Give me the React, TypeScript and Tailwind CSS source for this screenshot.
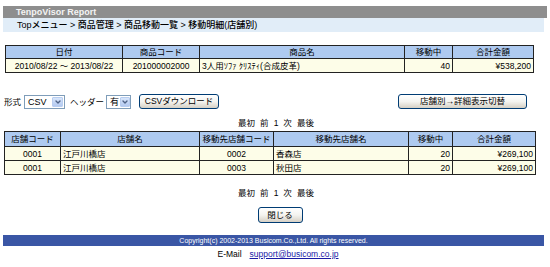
import { ChevronDown } from "lucide-react";

const font = "font-['Liberation_Sans','Noto_Sans_CJK_JP',sans-serif]";

function FakeSelect({ value, width }: { value: string; width: string }) {
  return (
    <div className={`${width} h-[14px] flex items-stretch border border-[#7f9db9] bg-white`}>
      <span className="flex-1 pl-[3px] text-[9px] leading-[12px]">{value}</span>
      <span className="w-[11px] m-[1px] flex items-center justify-center rounded-[1px] bg-gradient-to-b from-[#d8e6fb] to-[#b3c9f0] border border-[#b8cdf0]">
        <ChevronDown className="w-[8px] h-[8px] text-[#4d6185]" strokeWidth={4} />
      </span>
    </div>
  );
}

function XpButton({ label, width, className = "" }: { label: string; width: string; className?: string }) {
  return (
    <button
      className={`${width} h-[15px] rounded-[3px] border border-[#003c74] bg-gradient-to-b from-white via-[#f4f4f0] to-[#d6d0c5] text-[8.5px] leading-[13px] text-black text-center whitespace-nowrap ${className}`}
    >
      {label}
    </button>
  );
}

function Pager() {
  return (
    <div className="flex justify-center gap-[5px] text-[8.5px] leading-[11px] pl-[2px]">
      <span>最初</span>
      <span>前</span>
      <span>1</span>
      <span>次</span>
      <span>最後</span>
    </div>
  );
}

const th = "border border-[#222] bg-[#aecaf0] font-normal text-center h-[13px] leading-[11px] px-[2px] whitespace-nowrap";
const td = "border border-[#222] bg-[#fdfde8] h-[14px] leading-[12px] px-[2px] whitespace-nowrap overflow-hidden";

const rows = [
  { code: "0001", name: "江戸川橋店", toCode: "0002", toName: "香森店", qty: 20, total: "¥269,100" },
  { code: "0001", name: "江戸川橋店", toCode: "0003", toName: "秋田店", qty: 20, total: "¥269,100" },
];

export default function App() {
  return (
    <div className={`w-[550px] h-[267px] bg-white text-black overflow-hidden ${font}`}>
      <div className="mx-[3px] mt-[6px] h-[12px] bg-[#8e8e8e] text-[#f4f4f4] font-bold text-[9px] leading-[12px] pl-[13px]">
        TenpoVisor Report
      </div>
      <div className="ml-[3px] mr-[6px] h-[14px] bg-[#e1edf8] text-[9px] leading-[14px] pl-[14px] font-medium">
        Topメニュー &gt; 商品管理 &gt; 商品移動一覧 &gt; 移動明細(店舗別)
      </div>

      <table className="mt-[13px] ml-[5px] w-[528px] border-collapse text-[8.5px] table-fixed">
        <colgroup>
          <col className="w-[117px]" />
          <col className="w-[77px]" />
          <col className="w-[205px]" />
          <col className="w-[48px]" />
          <col className="w-[81px]" />
        </colgroup>
        <thead>
          <tr>
            <th className={th}>日付</th>
            <th className={th}>商品コード</th>
            <th className={th}>商品名</th>
            <th className={th}>移動中</th>
            <th className={th}>合計金額</th>
          </tr>
        </thead>
        <tbody>
          <tr>
            <td className={`${td} text-center`}>2010/08/22 ～ 2013/08/22</td>
            <td className={`${td} text-center`}>201000002000</td>
            <td className={td}>3人用ｿﾌｧ ｸﾘｽﾃｨ(合成皮革)</td>
            <td className={`${td} text-right`}>40</td>
            <td className={`${td} text-right`}>¥538,200</td>
          </tr>
        </tbody>
      </table>

      <div className="mt-[21px] flex items-center text-[8.5px] leading-[12px] pr-[23px]">
        <span className="ml-[4px] mr-[3px]">形式</span>
        <FakeSelect value="CSV" width="w-[41px]" />
        <span className="ml-[5px] mr-[2px]">ヘッダー</span>
        <FakeSelect value="有" width="w-[25px]" />
        <XpButton label="CSVダウンロード" width="w-[80px]" className="ml-[8px]" />
        <XpButton label="店舗別→詳細表示切替" width="w-[129px]" className="ml-auto" />
      </div>

      <div className="mt-[9px]">
        <Pager />
      </div>

      <table className="mt-[2px] ml-[4px] w-[531px] border-collapse text-[8.5px] table-fixed">
        <colgroup>
          <col className="w-[56px]" />
          <col className="w-[139px]" />
          <col className="w-[74px]" />
          <col className="w-[135px]" />
          <col className="w-[44px]" />
          <col className="w-[83px]" />
        </colgroup>
        <thead>
          <tr>
            <th className={`${th} h-[15px]`}>店舗コード</th>
            <th className={`${th} h-[15px]`}>店舗名</th>
            <th className={`${th} h-[15px]`}>移動先店舗コード</th>
            <th className={`${th} h-[15px]`}>移動先店舗名</th>
            <th className={`${th} h-[15px]`}>移動中</th>
            <th className={`${th} h-[15px]`}>合計金額</th>
          </tr>
        </thead>
        <tbody>
          {rows.map((r, i) => (
            <tr key={i}>
              <td className={`${td} text-center`}>{r.code}</td>
              <td className={td}>{r.name}</td>
              <td className={`${td} text-center`}>{r.toCode}</td>
              <td className={td}>{r.toName}</td>
              <td className={`${td} text-right`}>{r.qty}</td>
              <td className={`${td} text-right`}>{r.total}</td>
            </tr>
          ))}
        </tbody>
      </table>

      <div className="mt-[13px]">
        <Pager />
      </div>

      <div className="mt-[8px] flex justify-center">
        <XpButton label="閉じる" width="w-[45px]" className="h-[16px] ml-[10px]" />
      </div>

      <div className="mt-[12px] ml-[3px] mr-[6px] h-[11px] bg-[#3a56a5] text-white text-[7px] leading-[11px] text-center">
        Copyright(c) 2002-2013 Busicom.Co.,Ltd. All rights reserved.
      </div>

      <div className="mt-[2px] flex justify-center gap-[8px] text-[8.5px] leading-[12px] pl-[6px]">
        <span>E-Mail</span>
        <a href="#" className="text-[#1a1aa6] underline">support@busicom.co.jp</a>
      </div>
    </div>
  );
}
